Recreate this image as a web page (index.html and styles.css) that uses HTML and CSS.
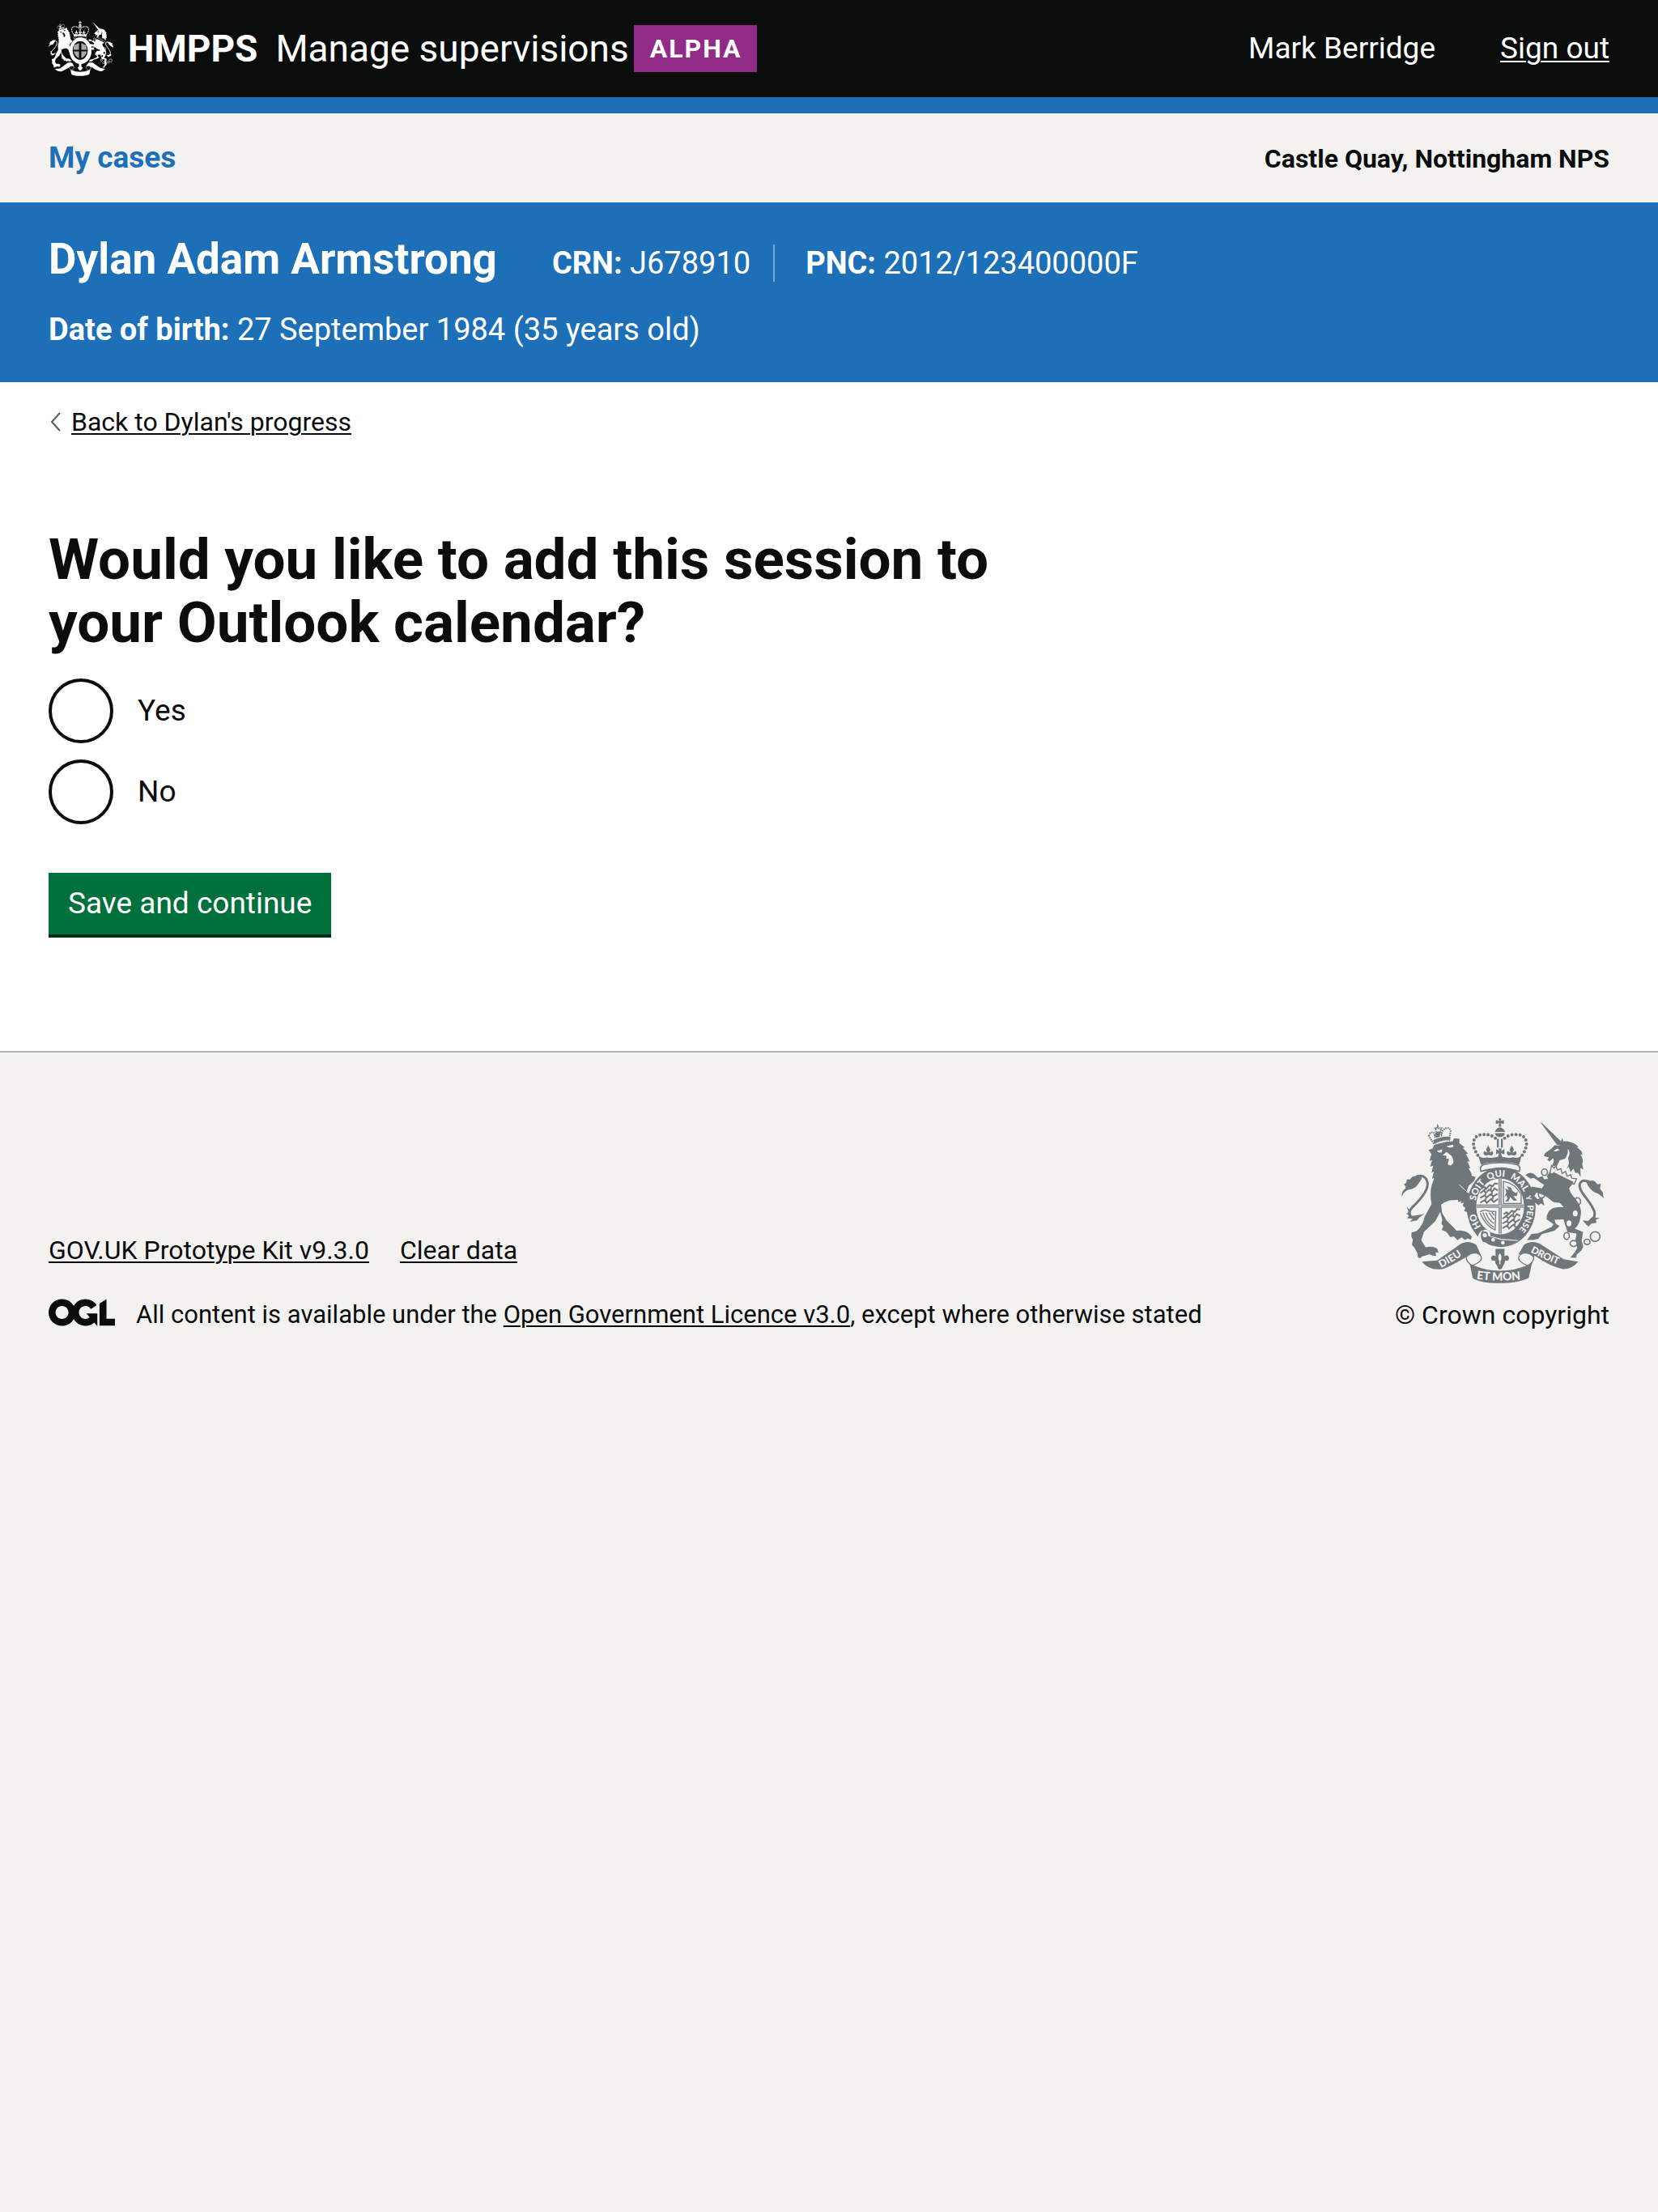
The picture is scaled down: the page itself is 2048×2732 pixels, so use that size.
FILE: index.html
```html
<!DOCTYPE html>
<html lang="en">
<head>
<meta charset="utf-8">
<meta name="viewport" content="width=device-width, initial-scale=1">
<title>Add this session to your Outlook calendar - Manage supervisions</title>
<link rel="stylesheet" href="styles.css">
</head>
<body>
<svg class="sprite" aria-hidden="true">
  <defs>
    <g id="half-crown">
      <path d="M379 197C349 152 364 122 398 120C420 119 436 125 446 135" fill="none" stroke="currentColor" stroke-width="12" stroke-linecap="round" stroke-dasharray="0 15"/>
      <path d="M380 195Q395 212 412 204Q440 212 462 198V224Q420 220 391 233Z"/>
      <path d="M418 161L426 176Q424 186 421 188L433 182Q440 190 431 198L419 196L406 198Q396 190 403 182L415 188Q410 178 410 174Z"/>
    </g>
    <g id="crown">
      <use href="#half-crown"/>
      <use href="#half-crown" transform="matrix(-1 0 0 1 923 0)"/>
      <path d="M456 60H467L464 70L476 67V81L464 78L467 91H456L459 78L446 81V67L459 70ZM443 110Q446 96 461 93Q476 96 480 110ZM443 115H480Q478 129 461 130Q445 129 443 115Z"/>
      <path d="M450 136H457V168H450ZM465 136H472V168H465ZM447 174L458 181L455 172H468L465 181L478 174V194L465 189L469 204H454L458 189L447 194Z"/>
      <path d="M399 232Q461 217 526 232Q541 242 533 257Q461 235 391 257Q383 242 399 232Z" fill="none" stroke="currentColor" stroke-width="5"/>
    </g>
    <g id="lion">
      <path d="M197 126Q202 108 216 113L220 127L226 112L221 97H228L230 88L236 97H244L240 108L244 120L249 104Q270 86 278 106L273 140Q240 137 216 155Z" fill="none" stroke="currentColor" stroke-width="6" stroke-dasharray="5 3"/>
      <path d="M213 141Q240 127 275 128L277 138Q243 139 218 155ZM222 112L240 107L238 128L224 132Z"/>
      <path d="M196 178L211 172L216 160Q250 146 286 145L291 134L311 136L310 152L331 168L323 170L343 191L335 193L349 220L340 219L351 244L345 246L358 270L353 272L371 278L365 293L345 310L338 330L352 345L360 372L373 402L371 412L360 405L363 419L350 412L343 419L338 407L328 404L333 393L323 385L327 373L317 376L316 367L307 372L305 362L292 364Q270 361 243 380L246 410L263 440L287 463L300 477Q330 474 345 487L357 499L353 511L341 506L332 512L319 502L304 513L290 498L277 501L262 482L245 474L251 461L244 451L247 435L239 408L221 442L179 482L169 513L185 539Q214 532 229 545L233 559L222 558L224 571L211 570L200 565L173 573L163 580L156 574L155 562L145 543L134 529L138 512L132 499L133 484L151 479Q177 456 181 426L207 379Q200 340 207 310L217 282L209 285L216 257L207 262L213 236L202 240L209 215L199 218L207 193Z"/>
      <path d="M227 181L247 175L245 186L235 187ZM262 164L287 158L289 166L275 169ZM248 197L263 185L281 199Q292 215 287 227Q277 242 267 229L272 211L261 209L263 199Z" class="crest-gap"/>
      <path d="M310 306L343 337" class="crest-line"/>
      <path d="M144 431Q108 420 137 389C165 362 197 326 192 298Q184 266 150 276" fill="none" stroke="currentColor" stroke-width="9"/>
      <path d="M97 351Q94 331 110 321L111 312L103 305Q117 302 115 286L127 287Q136 271 156 275Q178 275 166 291C151 319 139 322 123 325Q105 330 97 351ZM114 388L128 401L132 423L180 416Q163 425 153 439L126 444L137 434L115 431L126 421L112 414L124 411Z"/>
    </g>
    <g id="unicorn">
      <path d="M612 75L619 79L688 145L684 160L672 157Z"/>
      <path d="M625 200L628 190L654 171L664 160L682 161L693 132L697 146L711 145Q741 151 754 167L746 167Q771 183 767 196L760 193Q774 214 767 231L771 250L760 244L761 278L752 263L741 262L735 247L724 259L717 240L709 247Q723 225 714 208Q726 185 713 173Q717 191 703 210L684 215L672 238L655 236Q664 220 659 208L645 220L637 213L644 206Z"/>
      <path d="M653 235L662 245L669 238L675 252L688 247L692 265L705 257L711 275L724 269L728 282L746 284L737 305L647 263Z" fill="none" stroke="currentColor" stroke-width="4"/>
      <path d="M660 259L735 296L730 306L655 268Z"/>
      <path d="M645 261L732 303L718 319Q723 341 742 358L755 379Q766 400 761 422Q758 456 739 470L758 477L770 482L765 514L771 537L763 552L747 565L744 578L723 577L740 556L748 542L742 510L746 488L713 483L705 461L697 435L664 437L669 452L683 460L664 477L617 490L604 507L583 512L562 512L578 489L603 487L654 463L660 453L635 435Q633 408 657 394Q676 387 698 390L684 374L660 371L629 347L597 336L589 348L601 360L619 355L627 385L613 376L605 383L587 369L569 347L573 327L580 313L617 320L625 307L603 292L587 281L575 284L556 271Q571 255 588 267L602 280L619 275L626 286L640 285L635 275Z"/>
      <g class="crest-gap"><ellipse cx="741" cy="413" rx="9" ry="11"/><ellipse cx="718" cy="450" rx="9" ry="11"/><path d="M660 180L675 172L683 178L668 183Z"/></g>
      <g fill="none" stroke="currentColor" stroke-width="5"><ellipse cx="627" cy="260" rx="11" ry="12"/><ellipse cx="616" cy="343" rx="12" ry="13"/><ellipse cx="749" cy="369" rx="12" ry="14"/><ellipse cx="709" cy="497" rx="10" ry="13"/><ellipse cx="735" cy="525" rx="13" ry="11"/><ellipse cx="785" cy="519" rx="11" ry="10"/><circle cx="815" cy="499" r="18"/></g>
      <path d="M780 451Q819 439 812 406C801 369 750 331 758 303Q765 286 787 294" fill="none" stroke="currentColor" stroke-width="9"/>
      <path d="M846 358Q834 341 815 336Q795 326 783 299Q781 284 796 292Q813 287 823 305L836 303L833 321L844 337ZM832 431L817 437L820 448L801 451L790 462L768 439L789 441L803 427Z"/>
    </g>
    <g id="ribbon">
      <path d="M171 592L228 588L318 525Q348 512 374 531L391 569L353 561Q335 571 355 603Q461 650 570 603Q590 575 571 563L530 565L550 531Q574 512 608 525L698 583L752 592Q730 620 695 620Q650 612 590 570L578 608L568 653Q530 672 461 672Q386 672 360 653L351 609L338 574Q290 602 253 619Q198 628 171 592Z"/>
      <path d="M337 574Q355 556 377 561Q400 572 389 589Q376 601 360 606L352 603Q333 588 337 574ZM586 574Q568 556 546 561Q523 572 534 589Q547 601 563 606L571 603Q590 588 586 574Z" class="crest-gap crest-edge"/>
    </g>
  </defs>
  <symbol id="crest-small" viewBox="95 58 752 616" preserveAspectRatio="none">
    <g fill="currentColor">
      <use href="#crown"/><use href="#lion"/><use href="#unicorn"/><use href="#ribbon"/>
      <ellipse cx="466" cy="390" rx="128" ry="148"/>
      <ellipse cx="462" cy="387" rx="88" ry="104" class="crest-gap"/>
      <path d="M390 330L448 302V380H384ZM475 302L530 330L540 380H475ZM386 397H448V475Q400 450 386 397ZM475 397H540Q525 450 475 475Z" opacity=".65"/>
      <path d="M448 530H476V570L492 580L478 602L462 612L446 602L432 580L448 570Z"/>
    </g>
  </symbol>
</svg>

<header class="header">
  <a class="brand" href="#">
    <svg class="brand-crest" aria-hidden="true"><use href="#crest-small"/></svg>
    <span class="brand-org">HMPPS</span>
    <span class="brand-service">Manage supervisions</span>
    <strong class="tag">ALPHA</strong>
  </a>
  <div class="account">
    <span>Mark Berridge</span>
    <a href="#">Sign out</a>
  </div>
</header>

<nav class="nav" aria-label="Primary">
  <a class="nav-link" href="#">My cases</a>
  <span class="nav-team">Castle Quay, Nottingham NPS</span>
</nav>

<section class="person" aria-label="Person on probation">
  <div class="person-row">
    <h2 class="person-name">Dylan Adam Armstrong</h2>
    <div class="person-ids">
      <span class="person-id"><b>CRN:</b> J678910</span>
      <span class="person-id"><b>PNC:</b> 2012/123400000F</span>
    </div>
  </div>
  <p class="person-dob"><b>Date of birth:</b> 27 September 1984 (35 years old)</p>
</section>

<main class="main">
  <a class="back" href="#">
    <svg class="back-icon" viewBox="0 0 16 24" aria-hidden="true"><path d="M14 1L4 12L14 23" fill="none" stroke="currentColor" stroke-width="2"/></svg>
    <span class="back-text">Back to Dylan's progress</span>
  </a>
  <form class="form">
    <fieldset class="choices">
      <legend><h1 class="title">Would you like to add this session to your Outlook calendar?</h1></legend>
      <div class="choice"><input class="radio" type="radio" name="calendar" id="calendar-yes"><label for="calendar-yes">Yes</label></div>
      <div class="choice"><input class="radio" type="radio" name="calendar" id="calendar-no"><label for="calendar-no">No</label></div>
    </fieldset>
    <button class="button" type="button">Save and continue</button>
  </form>
</main>

<footer class="footer">
  <div class="footer-info">
    <div class="footer-links">
      <a href="#">GOV.UK Prototype Kit v9.3.0</a>
      <a href="#">Clear data</a>
    </div>
    <div class="licence">
      <svg class="ogl" viewBox="0 0 483.2 195.7" role="img" aria-label="Open Government Licence"><path fill="currentColor" d="M421.5 142.8V.1l-50.7 32.3v161.1h112.4v-50.7zm-122.3-9.6A47.12 47.12 0 0 1 221 97.8c0-26 21.1-47.1 47.1-47.1 16.7 0 31.4 8.7 39.7 21.8l42.7-27.2A97.63 97.63 0 0 0 268.1 0c-36.5 0-68.3 20.1-85.1 49.7A98 98 0 0 0 97.8 0C43.9 0 0 43.9 0 97.8s43.9 97.8 97.8 97.8c36.5 0 68.3-20.1 85.1-49.7a97.76 97.76 0 0 0 149.6 25.4l19.4 22.2h3v-87.8h-80l24.3 27.5zM97.8 145c-26 0-47.1-21.1-47.1-47.1s21.1-47.1 47.1-47.1 47.1 21.1 47.1 47.1S123.8 145 97.8 145"/></svg>
      <span>All content is available under the <a href="#">Open Government Licence v3.0</a>, except where otherwise stated</span>
    </div>
  </div>
  <a class="copyright" href="#">
    <svg class="copyright-crest" viewBox="95 58 752 616" role="img" aria-label="Royal coat of arms">
      <g fill="currentColor">
        <ellipse cx="466" cy="390" rx="128" ry="148"/>
        <ellipse cx="462" cy="387" rx="89" ry="104" class="crest-gap"/>
        <use href="#crown"/><use href="#lion"/><use href="#unicorn"/><use href="#ribbon"/>
        <path d="M374 386H550M462 284V488" fill="none" stroke="currentColor" stroke-width="11"/>
        <path d="M374 386H550M462 284V488" class="crest-line"/>
        <path id="lions" d="M392 321L403 314L411 321L422 308L434 312L442 302L454 303M388 338L401 328L409 337L421 325L433 332L441 320L453 328M388 356L404 346L411 354L426 342L436 350L453 340M388 373L405 363L412 374L428 360L438 371L454 359M407 319L403 333M429 312L427 329M409 340L402 350M432 332L430 348M410 357L403 369M435 352L432 367" fill="none" stroke="currentColor" stroke-width="6"/>
        <use href="#lions" x="83" y="95"/>
        <path d="M474 294Q516 300 540 342V376H474Z" fill="none" stroke="currentColor" stroke-width="4"/>
        <path d="M481 320L494 327L488 312L503 318L507 329L521 338L527 329L525 348L511 349L525 365L512 366L500 352L493 368L480 369L489 359L486 346L478 352L485 335Z"/>
        <path d="M387 408Q403 396 419 405L446 406L443 475Q407 459 388 412M398 410Q410 447 438 464M409 410Q418 438 439 451M421 410L440 437M431 409L441 420" fill="none" stroke="currentColor" stroke-width="4"/>
        <path d="M380 497Q388 470 412 474Q430 481 425 497L465 507L530 513Q495 548 445 538L406 516Q380 525 380 497Z" class="crest-gap"/>
        <path d="M391 494Q397 476 412 482Q420 488 417 497L463 511L529 516Q500 539 463 538Q430 536 411 519Q390 520 391 494Z"/>
        <path d="M400 476Q386 491 399 517Q417 520 423 506" fill="none" stroke="currentColor" stroke-width="4"/>
        <g class="crest-gap"><circle cx="405" cy="494" r="8"/><circle cx="436" cy="511" r="7"/><circle cx="472" cy="522" r="7"/></g>
        <path d="M445 545H478V572Q494 564 495 580Q493 592 481 588L477 601Q470 611 470 616Q461 628 453 616Q453 608 446 601L442 588Q429 592 428 578Q432 564 445 572Z"/>
        <path d="M461 558Q475 574 465 592V604H457V592Q447 573 461 558ZM437 574Q447 582 453 597ZM486 574Q476 582 470 597Z" class="crest-gap crest-edge"/>
        <g class="crest-text">
          <path id="garter" d="M466 503A97 113 0 0 1 466 277A97 113 0 0 1 466 503" fill="none"/>
          <text font-size="34"><textPath href="#garter" startOffset="88">HO</textPath></text>
          <text font-size="34"><textPath href="#garter" startOffset="188">SOIT</textPath></text>
          <text font-size="34"><textPath href="#garter" startOffset="280">QUI</textPath></text>
          <text font-size="34"><textPath href="#garter" startOffset="363">MAL</textPath></text>
          <text font-size="26"><textPath href="#garter" startOffset="454">Y</textPath></text>
          <text font-size="32"><textPath href="#garter" startOffset="487">PENSE</textPath></text>
          <path id="motto-left" d="M243 615Q284 595 350 550" fill="none"/>
          <text font-size="38"><textPath href="#motto-left">DIEU</textPath></text>
          <path id="motto-mid" d="M374 656Q461 669 560 656" fill="none"/>
          <text font-size="42"><textPath href="#motto-mid">ET MON</textPath></text>
          <path id="motto-right" d="M574 556Q620 584 720 619" fill="none"/>
          <text font-size="36"><textPath href="#motto-right">DROIT</textPath></text>
        </g>
      </g>
    </svg>
    <span>© Crown copyright</span>
  </a>
</footer>
</body>
</html>
```
FILE: styles.css
```css
:root {
  --black: #0b0c0c;
  --blue: #1d70b8;
  --grey: #f3f2f1;
  --green: #00703c;
  --gutter: 60px;
}

* {
  box-sizing: border-box;
}

body {
  margin: 0;
  background: var(--grey);
  color: var(--black);
  font-family: Roboto, "Liberation Sans", sans-serif;
  font-size: 37px;
  line-height: 50px;
}

a {
  color: inherit;
  text-decoration-thickness: 2px;
  text-underline-offset: 3px;
}

h1,
h2,
p {
  margin: 0;
}

.sprite {
  position: absolute;
  width: 0;
  height: 0;
}

.header {
  --crest-bg: var(--black);
  display: flex;
  align-items: center;
  justify-content: space-between;
  min-height: 140px;
  padding: 0 var(--gutter);
  border-bottom: 20px solid var(--blue);
  background: var(--black);
  color: #fff;
}

.brand {
  display: flex;
  align-items: center;
  font-size: 46px;
  text-decoration: none;
}

.brand-crest {
  width: 80px;
  height: 68px;
  margin-right: 18px;
}

.brand-org {
  margin-right: 22px;
  font-weight: 700;
}

.tag {
  margin-left: 6px;
  padding: 0 18px 0 20px;
  background: #912b88;
  font-size: 32px;
  line-height: 58px;
  letter-spacing: 2px;
}

.account {
  display: flex;
  gap: 80px;
}

.nav {
  display: flex;
  align-items: baseline;
  justify-content: space-between;
  padding: 30px var(--gutter);
}

.nav-link {
  color: var(--blue);
  font-weight: 700;
  text-decoration: none;
}

.nav-team {
  font-size: 32px;
  line-height: 40px;
  font-weight: 700;
}

.person {
  display: flex;
  flex-direction: column;
  gap: 32px;
  padding: 40px var(--gutter);
  background: var(--blue);
  color: #fff;
  font-size: 38px;
}

.person-row {
  display: flex;
  align-items: baseline;
  gap: 68px;
}

.person-name {
  font-size: 53px;
  line-height: 60px;
}

.person-ids {
  display: flex;
  line-height: 46px;
}

.person-id + .person-id {
  margin-left: 28px;
  padding-left: 38px;
  border-left: 2px solid #77a9d4;
}

.main {
  display: flex;
  flex-direction: column;
  align-items: flex-start;
  gap: 112px;
  padding: 30px var(--gutter) 140px;
  background: #fff;
}

.back {
  display: flex;
  align-items: center;
  gap: 12px;
  font-size: 32px;
  line-height: 38px;
  text-decoration: none;
}

.back-icon {
  width: 16px;
  height: 24px;
  color: #505a5f;
}

.back-text {
  text-decoration: underline 2px;
  text-underline-offset: 3px;
}

.form {
  display: flex;
  flex-direction: column;
  align-items: flex-start;
  gap: 60px;
  width: 66%;
}

.choices {
  display: grid;
  gap: 20px;
  margin: 0;
  padding: 0;
  border: 0;
}

.choices legend {
  padding: 0 0 30px;
}

.title {
  font-size: 71px;
  line-height: 78px;
}

.choice {
  display: flex;
  align-items: center;
  gap: 30px;
}

.radio {
  appearance: none;
  width: 80px;
  height: 80px;
  margin: 0;
  border: 4px solid var(--black);
  border-radius: 50%;
  background: #fff;
}

.radio:checked {
  box-shadow: inset 0 0 0 16px #fff;
  background: var(--black);
}

.button {
  padding: 13px 24px;
  border: 0;
  border-bottom: 4px solid #002d18;
  background: var(--green);
  color: #fff;
  font: inherit;
}

.footer {
  --crest-bg: var(--grey);
  display: flex;
  align-items: flex-end;
  justify-content: space-between;
  padding: 80px var(--gutter);
  border-top: 2px solid #b1b4b6;
  font-size: 32px;
  line-height: 40px;
}

.footer-info {
  display: grid;
  gap: 40px;
}

.footer-links {
  display: flex;
  gap: 38px;
}

.licence {
  display: flex;
  gap: 26px;
  font-size: 31px;
}

.ogl {
  width: 82px;
  height: 34px;
}

.copyright {
  display: grid;
  justify-items: center;
  gap: 18px;
  text-decoration: none;
}

.copyright-crest {
  width: 250px;
  height: 206px;
  color: #6f777b;
}

.crest-gap {
  fill: var(--crest-bg);
}

.crest-edge {
  stroke: currentColor;
  stroke-width: 4px;
}

.crest-line {
  fill: none;
  stroke: var(--crest-bg);
  stroke-width: 3px;
}

.crest-text {
  fill: var(--crest-bg);
  font-family: Lato, sans-serif;
  font-weight: 900;
}
```
